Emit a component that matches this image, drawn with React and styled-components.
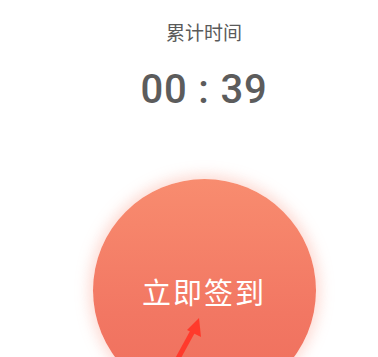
import React from "react";
import styled, { createGlobalStyle } from "styled-components";

const GlobalStyle = createGlobalStyle`
  html, body {
    margin: 0;
    padding: 0;
    background: #ffffff;
    overflow: hidden;
  }
`;

const Page = styled.div`
  position: relative;
  width: 378px;
  height: 357px;
  overflow: hidden;
  background: #fff;
  padding-left: 30px;
  box-sizing: border-box;
  display: flex;
  flex-direction: column;
  align-items: center;
  font-family: "Noto Sans CJK SC", "Noto Sans", sans-serif;
`;

const Label = styled.div`
  margin-top: 18px;
  font-size: 19px;
  line-height: 28px;
  color: #5a5a5a;
`;

const Timer = styled.div`
  margin-top: 21px;
  font-family: Roboto, "Noto Sans", sans-serif;
  font-weight: 500;
  font-size: 40px;
  line-height: 46px;
  color: #5c5c5c;
  letter-spacing: 0.8px;
`;

const SignButton = styled.button`
  margin-top: 66px;
  flex-shrink: 0;
  width: 223px;
  height: 223px;
  border-radius: 50%;
  border: none;
  background: linear-gradient(180deg, #f88c6f 0%, #f27763 60%, #ef6e5c 100%);
  box-shadow: 0 0 14px 4px rgba(248, 150, 130, 0.35);
  color: #fff;
  font-family: "Noto Sans CJK SC", sans-serif;
  font-size: 29px;
  letter-spacing: 2px;
  display: flex;
  align-items: center;
  justify-content: center;
  padding: 0;
`;

const Arrow = styled.svg`
  position: absolute;
  left: 165px;
  top: 312px;
  width: 45px;
  height: 50px;
`;

export default function App() {
  return (
    <>
      <GlobalStyle />
      <Page>
        <Label>累计时间</Label>
        <Timer>00 : 39</Timer>
        <SignButton>立即签到</SignButton>
        <Arrow viewBox="0 0 45 50">
          <line x1="11" y1="50" x2="29" y2="17" stroke="#ff3a2c" strokeWidth="5" />
          <polygon points="34,6 36,25 22,18" fill="#ff3a2c" />
        </Arrow>
      </Page>
    </>
  );
}
